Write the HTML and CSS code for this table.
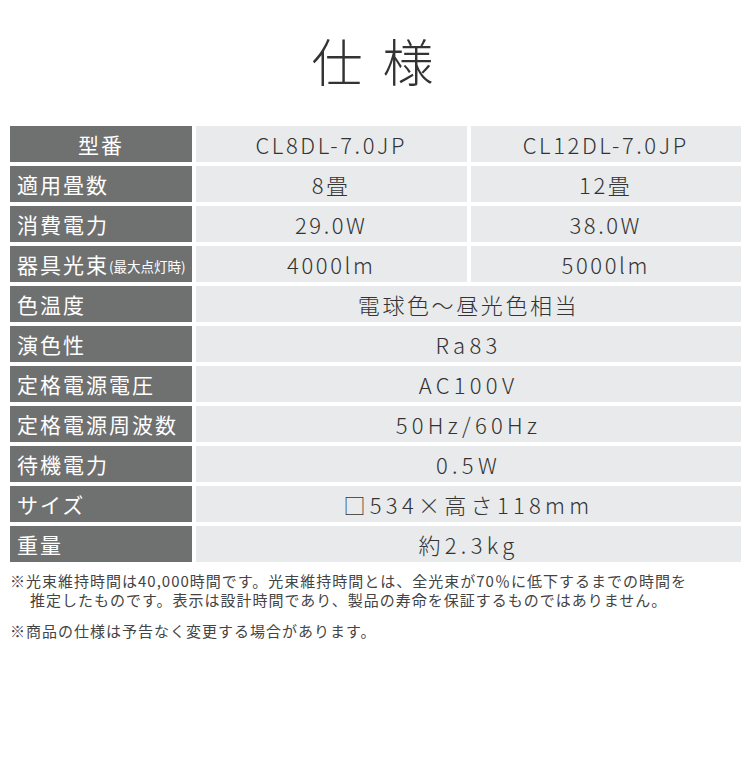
FILE: index.html
```html
<!DOCTYPE html>
<html lang="ja">
<head>
<meta charset="utf-8">
<title>仕様</title>
<link rel="stylesheet" href="styles.css">
</head>
<body>
<div class="page">
  <h1 class="title">仕様</h1>
  <div class="spec">
    <div class="th th-center">型番</div>
    <div class="td">CL8DL-7.0JP</div>
    <div class="td">CL12DL-7.0JP</div>

    <div class="th">適用畳数</div>
    <div class="td">8畳</div>
    <div class="td">12畳</div>

    <div class="th">消費電力</div>
    <div class="td">29.0W</div>
    <div class="td">38.0W</div>

    <div class="th">器具光束<span class="th-small">(最大点灯時)</span></div>
    <div class="td">4000lm</div>
    <div class="td">5000lm</div>

    <div class="th">色温度</div>
    <div class="td td-span">電球色〜昼光色相当</div>

    <div class="th">演色性</div>
    <div class="td td-span td-wide">Ra83</div>

    <div class="th">定格電源電圧</div>
    <div class="td td-span td-wide">AC100V</div>

    <div class="th">定格電源周波数</div>
    <div class="td td-span td-wide">50Hz/60Hz</div>

    <div class="th">待機電力</div>
    <div class="td td-span td-wide">0.5W</div>

    <div class="th">サイズ</div>
    <div class="td td-span td-wide">□534×高さ118mm</div>

    <div class="th">重量</div>
    <div class="td td-span td-wide">約2.3kg</div>
  </div>
  <div class="notes">
    <p class="note">※光束維持時間は40,000時間です。光束維持時間とは、全光束が70％に低下するまでの時間を<br>推定したものです。表示は設計時間であり、製品の寿命を保証するものではありません。</p>
    <p class="note">※商品の仕様は予告なく変更する場合があります。</p>
  </div>
</div>
</body>
</html>
```

FILE: styles.css
```css
html, body {
  margin: 0;
  padding: 0;
  background: #ffffff;
}

body {
  font-family: "Noto Sans CJK JP", "Noto Sans", sans-serif;
  color: #333333;
}

.page {
  width: 750px;
  padding: 0 9px 0 10px;
  box-sizing: border-box;
}

.title {
  margin: 0;
  height: 124px;
  display: flex;
  align-items: center;
  justify-content: center;
  font-size: 51px;
  font-weight: 300;
  letter-spacing: 20px;
  padding-left: 14px;
  padding-bottom: 4px;
  color: #333333;
  box-sizing: border-box;
  margin-bottom: 2px;
}

.spec {
  display: grid;
  grid-template-columns: 182px 1fr 1fr;
  grid-auto-rows: 36px;
  gap: 4px;
}

.th {
  background: #6f7171;
  color: #ffffff;
  font-size: 21px;
  font-weight: 400;
  letter-spacing: 2px;
  display: flex;
  align-items: center;
  padding-left: 7px;
  white-space: nowrap;
}

.th-center {
  justify-content: center;
  padding-left: 0;
}

.th-small {
  font-size: 13.5px;
  letter-spacing: 0;
  margin-top: 4px;
}

.td {
  background: #e8eaeb;
  color: #333333;
  font-size: 22px;
  font-weight: 300;
  letter-spacing: 2.6px;
  display: flex;
  align-items: center;
  justify-content: center;
  white-space: nowrap;
}

.td-span {
  grid-column: 2 / 4;
}

.td-wide {
  letter-spacing: 4.3px;
}

.notes {
  margin-top: 9px;
  color: #444444;
  font-size: 15px;
  line-height: 19px;
  letter-spacing: 1px;
}

.note {
  margin: 0 0 12px 0;
  padding-left: 20px;
  text-indent: -20px;
  white-space: nowrap;
}
```
